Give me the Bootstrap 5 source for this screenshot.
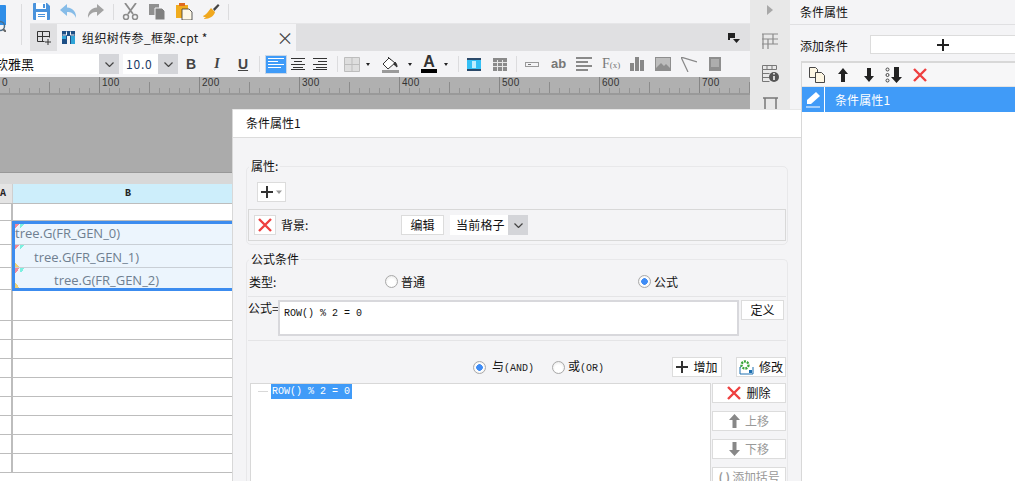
<!DOCTYPE html>
<html lang="zh">
<head>
<meta charset="utf-8">
<title>条件属性</title>
<link href="https://cdn.jsdelivr.net/npm/bootstrap@5.3.0/dist/css/bootstrap.min.css" rel="stylesheet">
<style>
html,body{width:1015px;height:481px;overflow:hidden;margin:0}
body{font:12px/16px "Noto Sans CJK SC","Liberation Sans",sans-serif;color:#111;background:#f4f4f6}
svg{display:block;flex:none}
.desk{width:1015px;height:481px;position:relative;overflow:hidden}
.maincol{width:750px;height:481px;flex:none}
.strip-left{width:30px;height:51px;flex:none;background:#f4f4f6}
.crop-ico{width:6px;height:27px;margin-top:5px;overflow:hidden;flex:none}
.vsep{width:1px;background:#dcdcde;flex:none}
.sep-tall{height:41px;margin:4px 0 0 15px}
.sep-tool{height:16px}
.sep-fmt{height:16px}
.toolbar{height:23px;background:#f4f4f6;padding-left:3px}
.tabs{height:28px;background:#e0e0e2;border-top:1px solid #e6e6e8}
.tab-add{width:27px}
.tab-on{width:239px;background:#f4f4f6;padding:0 2px 0 5px;letter-spacing:.4px;color:#222}
.tab-name{margin-left:7px;font-size:12px}
.tab-x{margin-left:auto;font-size:17px;color:#444;line-height:1}
.fmtbar{height:26px;background:#f4f4f6}
.combo{height:20px;background:#fff;flex:none;overflow:hidden}
.combo-txt{flex:1;padding-left:3px;white-space:nowrap;overflow:hidden}
.combo-font{width:119px;font-size:13px}
.combo-font .combo-txt{margin-left:-5px;padding:0}
.combo-size{width:55px;font-size:12px;color:#1a3a66;letter-spacing:.8px}
.combo-arrow{width:20px;height:100%;background:#d4d5d9;flex:none}
.fb{width:26px;text-align:center;font:700 14px/18px "Liberation Sans",sans-serif;color:#444;flex:none}
.fb-i{font-style:italic;font-family:"Liberation Serif",serif}
.fb-u{text-decoration:underline}
.al-on{width:22px;height:19px;background:#3f9bf8;border:1px solid #c9d6e6;flex:none}
.caret-dn{width:0;height:0;border:2.5px solid transparent;border-top:3px solid #222;border-bottom:0;flex:none}
.a-glyph{width:16px;font:700 16px/14px "Liberation Sans",sans-serif;text-align:center;color:#333;border-bottom:4px solid #000;flex:none}
.ab-glyph{width:13px;font:700 13px/14px "Liberation Sans",sans-serif;color:#777;flex:none}
.fx-glyph{width:17px;font:400 14px/14px "Liberation Serif",serif;color:#777;white-space:nowrap;flex:none}
.fx-glyph small{font-size:9px}
.l3{margin-left:3px}.l4{margin-left:4px}.l5{margin-left:5px}.l6{margin-left:6px}.l7{margin-left:7px}.l8{margin-left:8px}.l9{margin-left:9px}.l10{margin-left:10px}.l11{margin-left:11px}.l12{margin-left:12px}.l14{margin-left:14px}
.r10{margin-right:10px}
.ruler{height:18px;background-color:#b0b0b0;border-bottom:2px solid #999;
 background-image:linear-gradient(90deg,#868686 1px,transparent 1px),linear-gradient(90deg,#8c8c8c 1px,transparent 1px),linear-gradient(90deg,#959595 1px,transparent 1px);
 background-size:100px 100%,50px 11px,10px 5px;background-position:-1px 0,-1px bottom,-1px bottom;background-repeat:repeat-x}
.ruler-mark{width:100px;flex:none;padding-left:2px;font:10px/11px "Liberation Sans",sans-serif;color:#333;letter-spacing:.3px}
.paper-gray{height:78px;background:#ababab;border-bottom:1px solid #989898}
.paper-gap{height:11px;background:#d8d8d8}
.sheet{background:#fff}
.colhead{height:20px;border-bottom:1px solid #bdbdbd;font:700 10px/19px "Liberation Mono",monospace}
.hd-a{width:13px;background:#e4e4e4;border-right:1px solid #cfcfcf;overflow:hidden;flex:none;color:#222;text-align:left}
.hd-b{width:230px;flex:none;background:#cdeefb;text-align:center;color:#222}
.hd-rest{flex:1;background:#cdeefb}
.srow{height:19px;border-bottom:1px solid #bdbdbd}
.rownum{width:13px;border-right:2px solid #bdbdbd;flex:none}
.srow-tall{height:30px}
.srow-first{height:17px}
.srow-gr{display:flex;height:70px}
.rn-block{width:13px;flex:none;border-right:2px solid #bdbdbd}
.rn-cell{border-bottom:1px solid #bdbdbd}
.rn1{height:24px}.rn2{height:23px}.rn3{height:22px}
.sel-block{flex:1;border:solid #3c8cef;border-width:3px 0 3px 3px;background:#ecf5fd;margin-left:-1px}
.sel-row{height:21px;font:13px/19px "Open Sans","Liberation Sans",sans-serif;color:#6f7f90;border-bottom:1px solid #c9cfd6;white-space:nowrap;
 background-image:linear-gradient(135deg,#f08a9a 50%,transparent 50%),linear-gradient(135deg,#7cf0e0 50%,transparent 50%);background-size:5px 5px,5px 5px;background-position:0 0,5px 0;background-repeat:no-repeat}
.sel-row.has-y{height:23px;line-height:24px;background-image:linear-gradient(135deg,#f08a9a 50%,transparent 50%),linear-gradient(135deg,#7cf0e0 50%,transparent 50%),linear-gradient(45deg,#edd27a 50%,transparent 50%);background-size:5px 5px,5px 5px,5px 5px;background-position:0 0,5px 0,0 bottom}
.sel-row:last-child{border-bottom:0;height:20px;line-height:24px}
.ind1{padding-left:19px}.ind2{padding-left:39px}
.side{width:40px;height:481px;background:#e8e8e8;flex:none;padding-top:5px}
.side-a{margin-top:18px}.side-b{margin-top:16px}.side-c{margin-top:15px}
.panel{flex:1;height:481px;min-width:0;background:#f4f4f6}
.panel-h{height:25px;border-bottom:1px solid #e0e0e2;padding-left:10px;line-height:24px}
.add-line{height:36px;padding:10px 0 0 10px}
.add-btn{margin-left:auto;width:145px;height:19px;background:#fff;border:1px solid #dcdcdc;border-right:0}
.add-lab{line-height:22px}
.cond-box{margin-left:11px;background:#fff;height:420px;border-top:2px solid #d8d8d8;border-left:1px solid #d8d8d8}
.cond-tools{height:24px;background:#f7f7f8;border-bottom:1px solid #e4e4e4;padding-left:7px}
.cond-item{height:26px;background:#409bf8;color:#fff;border-bottom:1px solid #fff}
.cond-pen{width:23px;height:100%;border-right:1px solid #fff;flex:none}
.cond-lab{margin-left:10px;letter-spacing:.1px}
.win{position:absolute;left:232px;top:109px;width:570px;height:400px;background:#f4f4f6;border-left:1px solid #d8d8d8;border-right:1px solid #d8d8d8}
.win-h{height:29px;background:#fff;border-bottom:1px solid #dcdcdc;border-top:1px solid #e8e8e8;padding-left:13px;line-height:25px}
.win-b{padding:20px 13px 0}
.fset{border:1px solid #e8e8ea;border-radius:5px;padding:0 1px;margin:0;min-width:0}
.fset legend{float:none;width:auto;font-size:12px;line-height:16px;margin:0 0 0 1px;padding:0 2px;color:#111}
.fset-two{margin-top:6px;height:400px;border-bottom:0}
.plus-btn{width:29px;height:20px;background:#fff;border:1px solid #dcdcdc;margin:8px 0 0 9px}
.bg-row{height:32px;border:1px solid #d8d8d8;margin:7px 0 3px;padding-left:5px}
.x-btn{width:22px;height:20px;background:#fff;border:1px solid #dcdcdc;flex:none}
.bg-lab{margin-left:5px;width:120px;flex:none}
.plain-btn{background:#fff;border:1px solid #dcdcdc;height:20px;text-align:center;line-height:18px;flex:none;white-space:nowrap}
.edit-btn{width:43px}
.combo-cur{width:78px;margin-left:6px;padding-left:6px;letter-spacing:.2px}
.combo-cur .combo-txt{padding:0}
.tp-row{height:27px;margin-top:3px;border-bottom:1px solid #e4e4e6;padding-bottom:3px}
.tp-lab{width:137px;flex:none;padding-left:1px}
.tp-opt{width:253px;flex:none}
.rd{width:13px;height:13px;border-radius:50%;border:1px solid #a9a9a9;background:radial-gradient(circle at 50% 60%,#fff 40%,#e2e2e2 100%);flex:none;margin-right:3px;display:block}
.rd-on{background:radial-gradient(circle,#3f8cf5 0 3px,#fff 3.6px,#e8e8e8 100%)}
.fm-row{margin-top:3px;padding-bottom:4px;border-bottom:1px solid #e4e4e6;height:41px}
.fm-lab{width:30px;flex:none;white-space:nowrap;line-height:16px}
.fm-text{width:461px;height:36px;background:#fff;border:2px solid #d8d8dc;font:10px/16px "Liberation Mono",monospace;padding:4px;color:#111;flex:none}
.def-btn{width:43px;margin-left:2px}
.lg-row{margin-top:16px;height:20px;padding-left:225px}
.mono-s{font:10px/16px "Liberation Mono",monospace;color:#222}
.opt-or{margin-left:18px}
.act-btn{width:50px}
.act-add{margin-left:auto}
.act-mod{margin-left:14px}
.btn-in{gap:5px}
.tree-row{margin-top:6px;padding-left:2px}
.tree-box{width:461px;height:140px;background:#fff;border:1px solid #d8d8d8;flex:none;padding:0 0 0 7px}
.tree-dash{width:10px;height:1px;background:#d8d8d8;margin-right:3px;flex:none}
.tree-sel{background:#409bf8;color:#fff;font:10px/15px "Liberation Mono",monospace;width:81px;height:15px;padding-left:1px;flex:none;white-space:nowrap}
.tree-btns{width:74px;margin-left:1px;gap:8px;flex:none}
.tree-btns .plain-btn{height:20px;width:100%}
.muted-btn{color:#999}
.brk{font-size:12px;letter-spacing:-.2px}
</style>
</head>
<body>
<div class="desk d-flex">

  <div class="maincol d-flex flex-column">
    <div class="d-flex">
      <div class="strip-left d-flex">
        <div class="crop-ico">
          <svg width="24" height="27" viewBox="0 0 24 27"><path d="M-12 0H5a1 1 0 0 1 1 1V20H-12Z" fill="#2f8ee8"/><circle cx="0" cy="21" r="4.500" fill="none" stroke="#4d6e8a" stroke-width="1.500"/><path d="M3 24l3 3" stroke="#666" stroke-width="2"/></svg>
        </div>
        <div class="vsep sep-tall"></div>
      </div>
      <div class="flex-grow-1 d-flex flex-column">
        <div class="toolbar d-flex align-items-center">
          <svg class="r10" width="17" height="17" viewBox="0 0 17 17"><path d="M1 0h13l3 3v13a1 1 0 0 1-1 1H1a1 1 0 0 1-1-1V1a1 1 0 0 1 1-1Z" fill="#4a93dc"/><rect x="3" y="0" width="10" height="6" fill="#fff"/><rect x="3" y="9" width="11" height="8" fill="#fff"/><rect x="5" y="11" width="7" height="1" fill="#4a93dc"/><rect x="5" y="13" width="7" height="1" fill="#4a93dc"/><rect x="10" y="1" width="2" height="4" fill="#4a93dc"/></svg>
          <svg class="r10" width="17" height="17" viewBox="0 0 17 17"><path d="M7 1 0 7l7 6V9c4 0 7 1 9 6 .5-6-3-10-9-10.500Z" fill="#86bce8"/></svg>
          <svg width="17" height="17" viewBox="0 0 17 17"><path d="M10 1l7 6-7 6V9C6 9 3 10 1 15 .5 9 4 5 10 4.500Z" fill="#a3a3a3"/></svg>
          <div class="vsep sep-tool l9"></div>
          <svg class="l8 r10" width="17" height="17" viewBox="0 0 17 17" fill="none" stroke="#8c8c8c" stroke-width="1.500"><path d="M3 0l8 11M14 0 6 11" stroke-width="1.800"/><circle cx="4" cy="14" r="2.500"/><circle cx="13" cy="14" r="2.500"/></svg>
          <svg class="r10" width="17" height="17" viewBox="0 0 17 17"><rect x="0" y="1" width="10" height="11" fill="#909090"/><path d="M6 5h7l3 3v9H6Z" fill="#808080" stroke="#f4f4f6"/></svg>
          <svg class="r10" width="17" height="17" viewBox="0 0 17 17"><rect x="0" y="2" width="12" height="13" fill="#f0ac1e"/><rect x="3" y="0" width="6" height="3" fill="#e06a20"/><path d="M6 6h7l3 3v8H6Z" fill="#fdf8e8" stroke="#333" stroke-width=".8"/></svg>
          <svg width="17" height="17" viewBox="0 0 17 17"><path d="M10 6 15 1l1.500 1.500L11.500 8Z" fill="#444"/><path d="M8 5l4 4c-1 4-5 7-11 7 0-1 2-2 2-2-1 0-3 0-3-1 3-1 4-3 8-8Z" fill="#f0a81e"/></svg>
          <div class="vsep sep-tool l8"></div>
        </div>
        <div class="tabs d-flex align-items-stretch">
          <div class="tab-add d-flex align-items-center justify-content-center">
            <svg width="14" height="14" viewBox="0 0 14 14" fill="none" stroke="#333"><path d="M.5 .5h12M.5 5.500h12M.5 10.500h7M.5 .5v10M5.500 .5v10M12.500 .5v6M11 8v6M8 11h6"/></svg>
          </div>
          <div class="tab-on d-flex align-items-center">
            <svg width="13" height="13" viewBox="0 0 13 13"><path d="M0 0h13v13H8V5H5v8H0Z" fill="#1d4f86"/><path d="M.5 4h4V.5M8.500 .5V4h4" stroke="#f4f4f6" fill="none"/><rect x="9" y="5" width="4" height="8" fill="#2fa4d8"/><rect x="0" y="5" width="4" height="3" fill="#2fa4d8"/></svg>
            <span class="tab-name">组织树传参_框架.cpt *</span>
            <span class="tab-x">×</span>
          </div>
          <div class="flex-grow-1 d-flex align-items-center justify-content-end">
            <svg class="r10" width="12" height="10" viewBox="0 0 12 10"><path d="M0 0h7v2H2v5H0Z" fill="#222"/><path d="M2 2h5v3H2Z" fill="#222"/><path d="M5 6h7l-3.500 4Z" fill="#222"/></svg>
          </div>
        </div>
      </div>
    </div>

    <div class="fmtbar d-flex align-items-center">
      <div class="combo combo-font d-flex align-items-center">
        <div class="combo-txt">软雅黑</div>
        <div class="combo-arrow d-flex align-items-center justify-content-center"><svg width="9" height="5" viewBox="0 0 9 5" fill="none" stroke="#444" stroke-width="1.200"><path d="M.5 .5l4 4 4-4"/></svg></div>
      </div>
      <div class="combo combo-size d-flex align-items-center l4">
        <div class="combo-txt">10.0</div>
        <div class="combo-arrow d-flex align-items-center justify-content-center"><svg width="9" height="5" viewBox="0 0 9 5" fill="none" stroke="#444" stroke-width="1.200"><path d="M.5 .5l4 4 4-4"/></svg></div>
      </div>
      <div class="fb">B</div><div class="fb fb-i">I</div><div class="fb fb-u">U</div>
      <div class="vsep sep-fmt l3"></div>
      <div class="al-on l5 d-flex align-items-center justify-content-center"><svg width="16" height="12" viewBox="0 0 16 12" stroke="#fff"><path d="M0 .5h16M0 3.500h10M0 6.500h16M0 9.500h13"/></svg></div>
      <svg class="l4" width="14" height="12" viewBox="0 0 14 12" stroke="#333"><path d="M0 .5h14M3 3.500h8M0 6.500h14M2 9.500h10M0 11.500h14"/></svg>
      <svg class="l8" width="14" height="12" viewBox="0 0 14 12" stroke="#333"><path d="M0 .5h14M5 3.500h9M0 6.500h14M3 9.500h11M0 11.500h14"/></svg>
      <div class="vsep sep-fmt l10"></div>
      <svg class="l6" width="16" height="15" viewBox="0 0 16 15" fill="#dedede" stroke="#bdbdbd"><path d="M.5 .5h15v14H.5ZM8 .5v14M.5 7.500h15"/></svg>
      <div class="caret-dn l6"></div>
      <svg class="l12" width="17" height="17" viewBox="0 0 17 17"><path d="M7 2 1 8l5 5 7-6Z" fill="#fff" stroke="#333"/><path d="M6 1l3 3M13 6c2 2 2 4 2 5-2-1-3-3-3-4Z" fill="#333" stroke="#333"/><rect y="14" width="17" height="3" fill="#9a9a9a"/></svg>
      <div class="caret-dn l9"></div>
      <div class="a-glyph l9">A</div>
      <div class="caret-dn l7"></div>
      <div class="vsep sep-fmt l10"></div>
      <svg class="l8" width="14" height="13" viewBox="0 0 14 13"><rect width="14" height="13" fill="#2b4a6a"/><rect y="2" width="14" height="9" fill="#35c0f5"/><rect x="5" y="3" width="4" height="7" fill="#bfeeff"/></svg>
      <svg class="l12" width="14" height="13" viewBox="0 0 14 13"><rect width="14" height="13" fill="#8a8a8a"/><path d="M0 4.500h14M0 8.500h14M4.500 2v11M9.500 2v11" stroke="#e6e6e6"/></svg>
      <div class="vsep sep-fmt l9"></div>
      <svg class="l8" width="14" height="5" viewBox="0 0 14 5" fill="none" stroke="#999"><rect x=".5" y=".5" width="13" height="4"/><path d="M3 2.500h3" stroke="#777"/></svg>
      <div class="ab-glyph l12">ab</div>
      <svg class="l12" width="16" height="14" viewBox="0 0 16 14" fill="#8a8a8a"><path d="M0 0h16v2H0ZM0 4h12v2H0ZM0 8h16v2H0ZM0 12h12v2H0Z"/></svg>
      <div class="fx-glyph l10">F<small>(x)</small></div>
      <svg class="l11" width="14" height="14" viewBox="0 0 14 14" fill="#888"><path d="M0 6h4v8H0ZM5 0h4v14H5ZM10 3h4v11h-4Z"/></svg>
      <svg class="l11" width="16" height="14" viewBox="0 0 16 14"><rect width="16" height="14" fill="#8e8e8e"/><rect x="1" y="1" width="14" height="10" fill="#bdbdbd"/><path d="M1 11 6 6l3 3 2-2 4 4Z" fill="#8e8e8e"/></svg>
      <svg class="l10" width="16" height="15" viewBox="0 0 16 15" fill="none" stroke="#888" stroke-width="1.200"><path d="M0 0l16 5M0 0l7 15"/></svg>
      <svg class="l12" width="12" height="14" viewBox="0 0 12 14"><rect width="12" height="14" fill="#8e8e8e"/><path d="M2 3h8M2 5h8M2 7h8M2 9h8" stroke="#ccc"/></svg>
    </div>

    <div class="ruler d-flex">
      <div class="ruler-mark">0</div><div class="ruler-mark">100</div><div class="ruler-mark">200</div><div class="ruler-mark">300</div><div class="ruler-mark">400</div><div class="ruler-mark">500</div><div class="ruler-mark">600</div><div class="ruler-mark">700</div>
    </div>
    <div class="paper-gray"></div>
    <div class="paper-gap"></div>

    <div class="sheet flex-grow-1">
      <div class="colhead d-flex"><div class="hd-a">A</div><div class="hd-b">B</div><div class="hd-rest"></div></div>
      <div class="srow srow-first d-flex"><div class="rownum"></div></div>
      <div class="srow-gr">
        <div class="rn-block"><div class="rn-cell rn1"></div><div class="rn-cell rn2"></div><div class="rn-cell rn3"></div></div>
        <div class="sel-block">
          <div class="sel-row">tree.G(FR_GEN_0)</div>
          <div class="sel-row has-y ind1">tree.G(FR_GEN_1)</div>
          <div class="sel-row has-y ind2">tree.G(FR_GEN_2)</div>
        </div>
      </div>
      <div class="srow srow-tall d-flex"><div class="rownum"></div></div>
      <div class="srow d-flex"><div class="rownum"></div></div>
      <div class="srow d-flex"><div class="rownum"></div></div>
      <div class="srow d-flex"><div class="rownum"></div></div>
      <div class="srow d-flex"><div class="rownum"></div></div>
      <div class="srow d-flex"><div class="rownum"></div></div>
      <div class="srow d-flex"><div class="rownum"></div></div>
      <div class="srow d-flex"><div class="rownum"></div></div>
      <div class="srow d-flex"><div class="rownum"></div></div>
    </div>
  </div>

  <div class="side d-flex flex-column align-items-center">
    <svg width="6" height="10" viewBox="0 0 6 10"><path d="M0 0l6 5-6 5Z" fill="#a8a8a8"/></svg>
    <svg class="side-a" width="16" height="16" viewBox="0 0 16 16" fill="none" stroke="#8a8a8a" stroke-width="1.200"><path d="M0 1h16M0 6h16M0 11h16M1 1v15M6 6v10M11 1v10"/></svg>
    <svg class="side-b" width="17" height="17" viewBox="0 0 17 17"><path d="M.5 .5h14v4H.5ZM.5 4.500v12h7M.5 8.500h7M.5 12.500h7M5 .5v4M10 .5v4" fill="none" stroke="#777"/><circle cx="12" cy="12" r="5" fill="#555"/><path d="M12 8v1.500M12 11v4" stroke="#fff" stroke-width="1.500"/></svg>
    <svg class="side-c" width="15" height="24" viewBox="0 0 15 24" fill="none" stroke="#777" stroke-width="1.500"><path d="M0 1h15M2 1v23M13 1v23"/></svg>
  </div>

  <div class="panel d-flex flex-column">
    <div class="panel-h">条件属性</div>
    <div class="add-line d-flex">
      <span class="add-lab">添加条件</span>
      <div class="add-btn d-flex align-items-center justify-content-center"><svg width="12" height="12" viewBox="0 0 12 12" stroke="#222" stroke-width="2"><path d="M6 0v12M0 6h12"/></svg></div>
    </div>
    <div class="cond-box flex-grow-1">
      <div class="cond-tools d-flex align-items-center">
        <svg width="16" height="16" viewBox="0 0 16 16" fill="#fdf6e3" stroke="#333" stroke-width=".9"><path d="M.5 .5h6l2 2v8h-8Z"/><path d="M6.500 5.500h6l3 3v7h-9Z"/></svg>
        <svg class="l12" width="12" height="14" viewBox="0 0 12 14" fill="#222"><path d="M6 0l5 6H8v8H4V6H1Z"/></svg>
        <svg class="l14" width="12" height="14" viewBox="0 0 12 14" fill="#222"><path d="M6 14 1 8h3V0h4v8h3Z"/></svg>
        <svg class="l10" width="18" height="16" viewBox="0 0 18 16"><g fill="none" stroke="#444"><circle cx="2.500" cy="2.500" r="1.500"/><circle cx="2.500" cy="8" r="1.500"/><circle cx="2.500" cy="13.500" r="1.500"/></g><path d="M11.500 16 6 10h3V0h5v10h3Z" fill="#222"/></svg>
        <svg class="l10" width="14" height="14" viewBox="0 0 14 14" stroke="#ee4040" stroke-width="2.400"><path d="M1 1l12 12M13 1 1 13"/></svg>
      </div>
      <div class="cond-item d-flex align-items-center">
        <div class="cond-pen d-flex align-items-center justify-content-center"><svg width="15" height="16" viewBox="0 0 15 16" fill="#fff"><path d="M10 0l4 4-9 8H1v-4ZM0 14.500h14v1H0Z"/></svg></div>
        <span class="cond-lab">条件属性1</span>
      </div>
    </div>
  </div>

  <div class="win">
    <div class="win-h">条件属性1</div>
    <div class="win-b">
      <fieldset class="fset">
        <legend>属性:</legend>
        <div class="plus-btn d-flex align-items-center justify-content-center">
          <svg width="22" height="12" viewBox="0 0 22 12"><path d="M6 0v12M0 6h12" stroke="#333" stroke-width="2"/><path d="M15 4.500h6L18 8Z" fill="#999"/></svg>
        </div>
        <div class="bg-row d-flex align-items-center">
          <div class="x-btn d-flex align-items-center justify-content-center"><svg width="14" height="14" viewBox="0 0 14 14" stroke="#ee4040" stroke-width="2.400"><path d="M1 1l12 12M13 1 1 13"/></svg></div>
          <span class="bg-lab">背景:</span>
          <div class="plain-btn edit-btn">编辑</div>
          <div class="combo combo-cur d-flex align-items-center">
            <div class="combo-txt">当前格子</div>
            <div class="combo-arrow d-flex align-items-center justify-content-center"><svg width="9" height="5" viewBox="0 0 9 5" fill="none" stroke="#444" stroke-width="1.200"><path d="M.5 .5l4 4 4-4"/></svg></div>
          </div>
        </div>
      </fieldset>

      <fieldset class="fset fset-two">
        <legend>公式条件</legend>
        <div class="tp-row d-flex align-items-center">
          <span class="tp-lab">类型:</span>
          <div class="tp-opt d-flex align-items-center"><span class="rd"></span>普通</div>
          <div class="d-flex align-items-center"><span class="rd rd-on"></span>公式</div>
        </div>
        <div class="fm-row d-flex align-items-start">
          <span class="fm-lab">公式=</span>
          <div class="fm-text">ROW() % 2 = 0</div>
          <div class="plain-btn def-btn">定义</div>
        </div>
        <div class="lg-row d-flex align-items-center">
          <span class="rd rd-on"></span><span class="l3">与<span class="mono-s">(AND)</span></span>
          <span class="rd opt-or"></span><span>或<span class="mono-s">(OR)</span></span>
          <div class="plain-btn act-btn act-add d-flex align-items-center justify-content-center btn-in"><svg width="12" height="12" viewBox="0 0 12 12" stroke="#333" stroke-width="2"><path d="M6 0v12M0 6h12"/></svg>增加</div>
          <div class="plain-btn act-btn act-mod d-flex align-items-center justify-content-center btn-in"><svg width="15" height="15" viewBox="0 0 15 15"><path d="M2 7H1v7h13V7" fill="none" stroke="#1c6fb0"/><circle cx="6" cy="5" r="3.500" fill="none" stroke="#3aa53a" stroke-width="2.400" stroke-dasharray="2 1"/><rect x="10" y="10" width="3" height="3" fill="#1c6fb0"/></svg>修改</div>
        </div>
        <div class="tree-row d-flex">
          <div class="tree-box"><div class="d-flex align-items-center"><span class="tree-dash"></span><span class="tree-sel">ROW() % 2 = 0</span></div></div>
          <div class="tree-btns d-flex flex-column">
            <div class="plain-btn d-flex align-items-center justify-content-center btn-in"><svg width="14" height="14" viewBox="0 0 14 14" stroke="#ee4040" stroke-width="2.400"><path d="M1 1l12 12M13 1 1 13"/></svg>删除</div>
            <div class="plain-btn muted-btn d-flex align-items-center justify-content-center btn-in"><svg width="11" height="14" viewBox="0 0 11 14" fill="#888"><path d="M5.500 0 11 6H7.500v8h-4V6H0Z"/></svg>上移</div>
            <div class="plain-btn muted-btn d-flex align-items-center justify-content-center btn-in"><svg width="11" height="14" viewBox="0 0 11 14" fill="#888"><path d="M5.500 14 0 8h3.500V0h4v8H11Z"/></svg>下移</div>
            <div class="plain-btn muted-btn d-flex align-items-center justify-content-center brk"><b>( )</b>&nbsp;添加括号</div>
          </div>
        </div>
      </fieldset>
    </div>
  </div>

</div>
<script src="https://cdn.jsdelivr.net/npm/bootstrap@5.3.0/dist/js/bootstrap.bundle.min.js"></script>
</body>
</html>
